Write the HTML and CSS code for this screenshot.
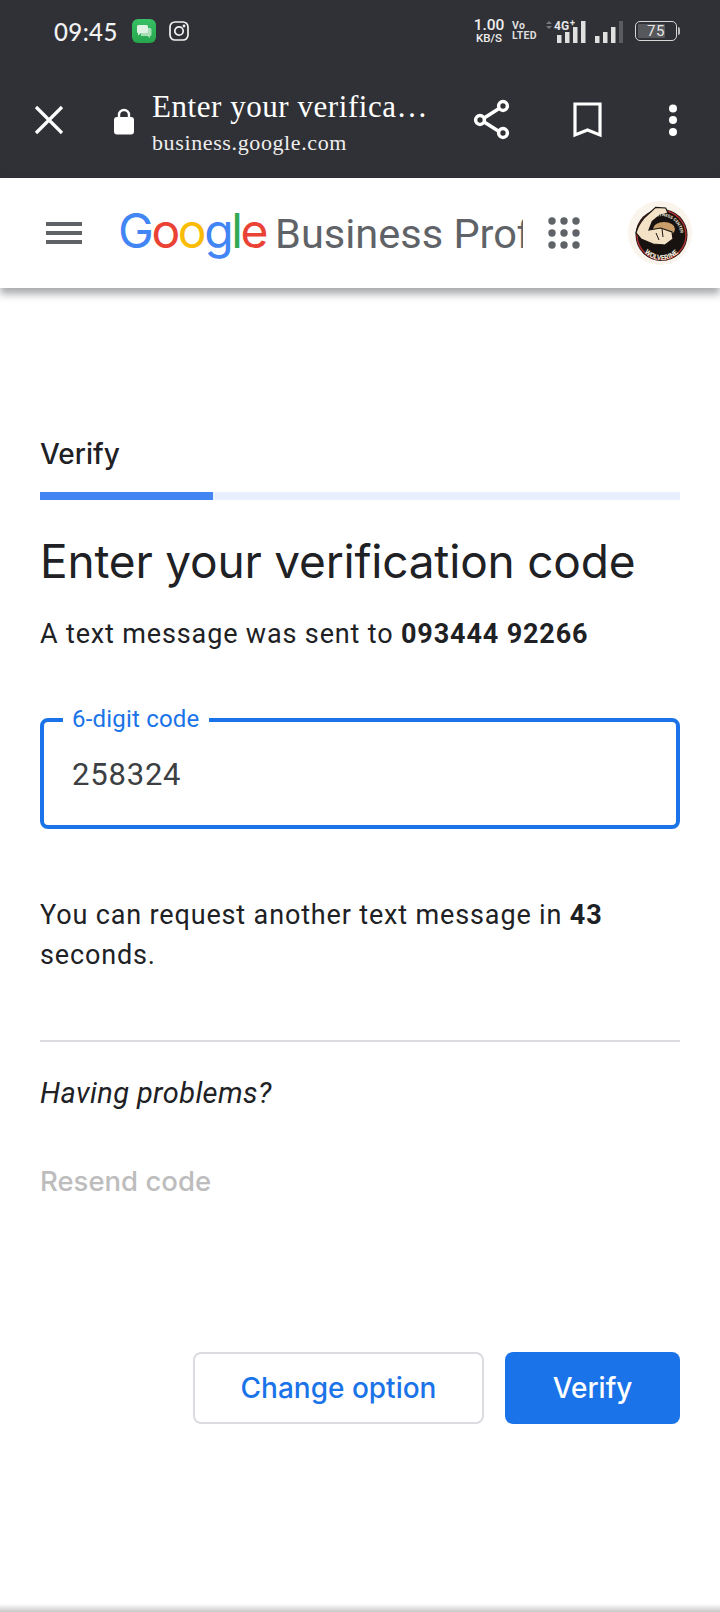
FILE: index.html
```html
<!DOCTYPE html>
<html lang="en">
<head>
<meta charset="utf-8">
<title>Enter your verification code</title>
<link rel="stylesheet" href="styles.css">
</head>
<body>
<div class="page">
  <div class="chrome">
    <div class="status">
      <span class="time">09:45</span>
      <svg class="app-icon" width="24" height="24" viewBox="0 0 24 24"><defs><linearGradient id="appGreen" x1="0" y1="0" x2="0" y2="1"><stop offset="0" stop-color="#37c163"/><stop offset="1" stop-color="#27a64e"/></linearGradient></defs><rect width="24" height="24" rx="6" fill="url(#appGreen)"/><path d="M9 9h9q1.500 0 1.500 1.500v5q0 1.500-1.500 1.500v2l-2.500-2H9z" fill="#a9dfb7"/><path d="M5 7.500q0-1.500 1.500-1.500h8q1.500 0 1.500 1.500v5q0 1.500-1.500 1.500H9l-3 2.500V14q-1 0-1-1.500z" fill="#dff2e3"/></svg>
      <svg class="insta" width="20" height="20" viewBox="0 0 20 20" fill="none" stroke="#f2f2f2" stroke-width="1.700"><rect x="1" y="1" width="18" height="18" rx="5"/><circle cx="10" cy="10" r="4.200"/><circle cx="15" cy="5" r=".6" fill="#f2f2f2"/></svg>
      <div class="status-right">
        <div class="speed"><b>1.00</b><i>KB/S</i></div>
        <div class="volte"><span>Vo</span><span>LTED</span></div>
        <svg class="signal" width="78" height="24" viewBox="0 0 78 24">
          <g fill="#77787b"><path d="M1 5l3-3 3 3zM1 7h6l-3 3z"/></g>
          <text x="9" y="11" class="net">4G</text><text x="25" y="7" class="net plus">+</text>
          <g fill="#e0e0e0"><rect x="12" y="16" width="4.500" height="8"/><rect x="20" y="13" width="4.500" height="11"/><rect x="28" y="8" width="4.500" height="16"/><rect x="36" y="2" width="4.500" height="22"/>
          <rect x="50" y="17" width="4.500" height="7"/><rect x="58" y="13" width="4.500" height="11"/><rect x="66" y="8" width="4.500" height="16"/></g>
          <rect x="74" y="2" width="4" height="22" fill="#5a5b5e"/>
        </svg>
        <div class="battery"><span class="battery-fill"></span><span class="battery-num">75</span></div>
        <span class="battery-tip"></span>
      </div>
    </div>
    <div class="toolbar">
      <svg class="close" width="30" height="30" viewBox="0 0 30 30" stroke="#fff" stroke-width="3.200" fill="none"><path d="M2 2l26 26M28 2L2 28"/></svg>
      <svg class="lock" width="20" height="27" viewBox="0 0 20 27"><path d="M5 10V7a5 5 0 0 1 10 0v3" fill="none" stroke="#fff" stroke-width="2.400"/><rect y="9" width="20" height="17.500" rx="3" fill="#fff"/></svg>
      <div class="titles">
        <div class="page-title">Enter your verifica…</div>
        <div class="page-url">business.google.com</div>
      </div>
      <svg class="share" width="38" height="42" viewBox="0 0 38 42" fill="none" stroke="#fff" stroke-width="3.500"><path d="M8 21L30 7M8 21l22 14"/><circle cx="7" cy="21" r="4.400" fill="#303136"/><circle cx="30" cy="7" r="4.400" fill="#303136"/><circle cx="30" cy="34" r="4.400" fill="#303136"/></svg>
      <svg class="bookmark" width="30" height="36" viewBox="0 0 30 36" fill="none" stroke="#fff" stroke-width="3.200"><path d="M2 2h25v31l-12.500-5L2 33z"/></svg>
      <svg class="dots" width="10" height="32" viewBox="0 0 10 32" fill="#fff"><circle cx="5" cy="4.500" r="4"/><circle cx="5" cy="16" r="4"/><circle cx="5" cy="28" r="4"/></svg>
    </div>
  </div>
  <header class="appbar">
    <div class="burger"><span></span><span></span><span></span></div>
    <div class="brand"><span class="logo"><span class="c-b">G</span><span class="c-r">o</span><span class="c-y">o</span><span class="c-b">g</span><span class="c-g">l</span><span class="c-r">e</span></span> <span class="product">Business Profile Manager</span></div>
    <svg class="apps" width="32" height="32" viewBox="0 0 32 32" fill="#5f6368"><circle cx="4" cy="4" r="3.700"/><circle cx="16" cy="4" r="3.700"/><circle cx="28" cy="4" r="3.700"/><circle cx="4" cy="16" r="3.700"/><circle cx="16" cy="16" r="3.700"/><circle cx="28" cy="16" r="3.700"/><circle cx="4" cy="28" r="3.700"/><circle cx="16" cy="28" r="3.700"/><circle cx="28" cy="28" r="3.700"/></svg>
    <svg class="avatar" width="64" height="64" viewBox="0 0 64 64">
      <circle cx="32" cy="32" r="32" fill="#fbf4ec"/>
      <circle cx="33.500" cy="34" r="26" fill="#17110f"/>
      <circle cx="33.500" cy="34" r="24.500" fill="none" stroke="#a92f30" stroke-width="1.500"/>
      <ellipse cx="36" cy="28" rx="11" ry="7" fill="#c99e6b"/>
      <path d="M8 32Q10 24 16 17L27.700 6.300 37.700 7 40 12 32 14 24.300 20.300 21 29 32.700 27 44 31 45 38 37 44 25 43 13 38z" fill="#f3e2c6" stroke="#1b1411" stroke-width="1.200"/>
      <path d="M34 28l1 8M28 32l3 7" stroke="#1b1411" stroke-width="1" fill="none"/>
      <defs>
        <path id="arcTop" d="M28 16A19 19 0 0 1 52.500 35.500"/>
        <path id="arcBot" d="M13 46.500A23 23 0 0 0 54 46.500"/>
      </defs>
      <text class="badge-text"><textPath href="#arcTop">FITNESS CENTER</textPath></text>
      <text class="badge-text big"><textPath href="#arcBot" startOffset="6">WOLVERINE</textPath></text>
    </svg>
  </header>
  <main class="content">
    <div class="step">Verify</div>
    <div class="progress"><div class="progress-bar"></div></div>
    <h1 class="heading">Enter your verification code</h1>
    <p class="sent">A text message was sent to <b>093444 92266</b></p>
    <div class="field">
      <span class="field-label">6-digit code</span>
      <span class="field-value">258324</span>
    </div>
    <p class="wait">You can request another text message in <b>43</b> seconds.</p>
    <hr class="rule">
    <p class="problems">Having problems?</p>
    <p class="resend">Resend code</p>
    <div class="actions">
      <button class="btn btn-outline">Change option</button>
      <button class="btn btn-primary">Verify</button>
    </div>
  </main>
  <div class="edge"></div>
</div>
</body>
</html>
```
FILE: styles.css
```css
* { box-sizing: border-box; }
html, body { margin: 0; padding: 0; background: #fff; }
.page { width: 720px; height: 1612px; display: flex; flex-direction: column; overflow: hidden; font-family: Roboto, "Liberation Sans", sans-serif; color: #202124; }

.chrome { height: 178px; background: #303136; flex: none; }
.status { height: 62px; padding: 0 0 0 54px; display: flex; align-items: center; color: #f2f2f2; }
.time { font-family: Lato, sans-serif; font-size: 24px; letter-spacing: .4px; font-weight: 500; width: 78px; }
.app-icon { flex: none; }
.insta { margin-left: 13px; flex: none; }
.status-right { margin-left: auto; margin-right: 40px; display: flex; align-items: center; }
.speed { display: flex; flex-direction: column; align-items: center; width: 30px; color: #eee; }
.speed b { font-size: 15.500px; font-weight: 500; line-height: 15px; }
.speed i { font-style: normal; font-size: 11.500px; font-weight: 500; line-height: 11.500px; }
.volte { margin-left: 8px; display: flex; flex-direction: column; font-size: 10.500px; font-weight: 700; line-height: 10.500px; color: #ddd; width: 24px; letter-spacing: .3px; }
.signal { margin-left: 9px; flex: none; }
.net { font: 700 12px Roboto, sans-serif; fill: #e6e6e6; }
.plus { font-size: 9px; }
.battery { margin-left: 12px; width: 42px; height: 20px; border: 1.500px solid #d6d6d6; border-radius: 5px; display: flex; align-items: center; justify-content: center; position: relative; overflow: hidden; }
.battery-fill { position: absolute; left: 2px; top: 2px; bottom: 2px; width: 27px; background: #57585b; border-radius: 1px; }
.battery-num { position: relative; font-size: 15px; color: #e6e6e6; letter-spacing: .5px; }
.battery-tip { width: 2px; height: 8px; background: #bbb; margin-left: 1px; border-radius: 0 2px 2px 0; }

.toolbar { height: 116px; display: flex; align-items: center; }
.close { margin-left: 34px; flex: none; }
.lock { margin-left: 50px; flex: none; margin-top: 2px; }
.titles { margin-left: 18px; width: 296px; color: #fff; font-family: "Liberation Serif", serif; margin-top: 8px; }
.page-title { font-size: 31px; line-height: 36px; letter-spacing: .55px; white-space: nowrap; }
.page-url { font-size: 22px; line-height: 32px; margin-top: 2px; color: #eee; letter-spacing: .62px; white-space: nowrap; }
.share { margin-left: 25px; flex: none; }
.bookmark { margin-left: 62px; flex: none; }
.dots { margin-left: 65px; flex: none; }

.appbar { height: 110px; flex: none; display: flex; align-items: center; background: #fff; box-shadow: 0 6px 8px rgba(60,64,67,.45); position: relative; }
.burger { margin-left: 46px; width: 36px; display: flex; flex-direction: column; gap: 5px; flex: none; }
.burger span { height: 4px; background: #5f6368; }
.brand { margin-left: 36px; margin-bottom: 6px; width: 405px; overflow: hidden; white-space: nowrap; font-family: Inter, sans-serif; display: flex; align-items: baseline; gap: 9px; flex: none; }
.logo { font-size: 48px; font-weight: 400; letter-spacing: -2.400px; }
.product { font-family: Roboto, sans-serif; font-size: 41.500px; color: #5f6368; }
.c-b { color: #4285f4; } .c-r { color: #ea4335; } .c-y { color: #fbbc05; } .c-g { color: #34a853; }
.apps { margin-left: 25px; flex: none; }
.avatar { margin-left: 48px; flex: none; }
.badge-text { font: 700 4.200px Roboto, sans-serif; fill: #f4eadb; }
.big { font-size: 7px; }

.content { flex: 1; padding: 150px 40px 0; display: flex; flex-direction: column; }
.step { font-family: Inter, sans-serif; font-size: 28px; font-weight: 500; line-height: 32px; }
.progress { height: 8px; margin-top: 22px; background: #e8f0fe; }
.progress-bar { width: 173px; height: 100%; background: #4285f4; }
.heading { margin: 30px 0 0; font-family: Inter, sans-serif; font-size: 46px; font-weight: 400; line-height: 62px; letter-spacing: -.2px; }
.sent { margin: 24px 0 0; font-size: 27px; line-height: 36px; letter-spacing: .85px; }
.sent b, .wait b { font-weight: 700; }
.field { margin-top: 66px; height: 111px; border: 4px solid #1a73e8; border-radius: 8px; padding: 0 28px; position: relative; display: flex; align-items: center; }
.field-label { position: absolute; left: 19px; top: -16px; background: #fff; padding: 0 9px; font-size: 24px; line-height: 26px; letter-spacing: .2px; color: #1a73e8; }
.field-value { font-size: 31px; color: #3c4043; letter-spacing: .8px; margin-top: 2px; }
.wait { margin: 66px 0 0; font-size: 27px; line-height: 40px; letter-spacing: .85px; }
.rule { margin: 65px 0 0; border: 0; height: 2px; background: #dadce0; }
.problems { margin: 33px 0 0; font-size: 29px; font-style: italic; line-height: 36px; letter-spacing: .4px; }
.resend { margin: 52px 0 0; font-family: Inter, sans-serif; font-size: 27.500px; font-weight: 500; line-height: 36px; color: #bdbdbd; }
.actions { margin-top: 153px; display: flex; justify-content: flex-end; gap: 21px; }
.btn { height: 72px; border-radius: 8px; font-family: Inter, sans-serif; font-size: 28px; font-weight: 500; }
.btn-outline { width: 291px; background: #fff; border: 2px solid #dadce0; color: #1a73e8; }
.btn-primary { width: 175px; background: #1a73e8; border: 0; color: #fff; }

.edge { height: 8px; flex: none; background: linear-gradient(#fff, #c8c8c8); }
```
